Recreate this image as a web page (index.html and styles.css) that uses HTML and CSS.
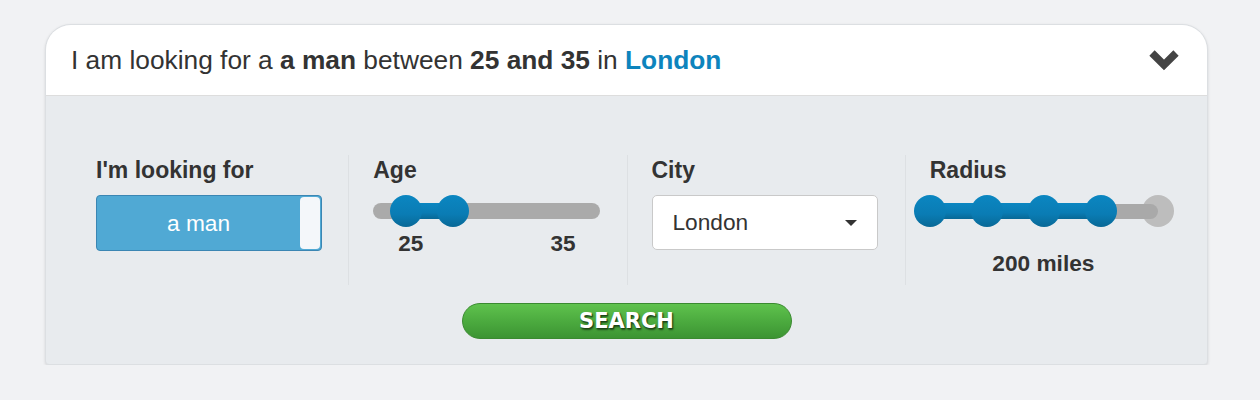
FILE: index.html
```html
<!DOCTYPE html>
<html lang="en">
<head>
<meta charset="utf-8">
<title>Search</title>
<link rel="stylesheet" href="styles.css">
</head>
<body>
<div class="card">
  <div class="card-header">
    <div class="summary">I am looking for a <b>a man</b> between <b>25 and 35</b> in <b class="city">London</b></div>
    <svg class="chevron" width="32" height="23" viewBox="0 0 32 23"><polyline points="4,4 16,16 28,4" fill="none" stroke="#444" stroke-width="7.5" stroke-linejoin="miter" stroke-linecap="butt"/></svg>
  </div>
  <div class="card-body">
    <div class="filters">
      <div class="col">
        <div class="label">I'm looking for</div>
        <div class="toggle"><span class="toggle-text">a man</span><span class="knob"></span></div>
      </div>
      <div class="col">
        <div class="label">Age</div>
        <svg class="age-slider" width="228" height="34" viewBox="0 0 228 34">
          <defs>
            <linearGradient id="blue" x1="0" y1="0" x2="0" y2="1">
              <stop offset="0" stop-color="#0b86c1"/>
              <stop offset="0.6" stop-color="#0a7cb4"/>
              <stop offset="1" stop-color="#086896"/>
            </linearGradient>
          </defs>
          <rect x="0" y="9" width="227" height="16" rx="8" fill="#aaaaaa"/>
          <rect x="33" y="9" width="47" height="16" fill="url(#blue)"/>
          <circle cx="33" cy="17" r="16" fill="url(#blue)"/>
          <circle cx="80" cy="17" r="16" fill="url(#blue)"/>
        </svg>
        <div class="range-labels"><span>25</span><span>35</span></div>
      </div>
      <div class="col">
        <div class="label">City</div>
        <div class="select"><span>London</span><span class="caret"></span></div>
      </div>
      <div class="col">
        <div class="label">Radius</div>
        <svg class="radius-slider" width="262" height="34" viewBox="0 0 262 34">
          <defs>
            <linearGradient id="blue2" x1="0" y1="0" x2="0" y2="1">
              <stop offset="0" stop-color="#0b86c1"/>
              <stop offset="0.6" stop-color="#0a7cb4"/>
              <stop offset="1" stop-color="#086896"/>
            </linearGradient>
          </defs>
          <circle cx="245" cy="17" r="16" fill="#bdbdbd"/>
          <rect x="180" y="10" width="65" height="15" rx="7.5" fill="#a9a9a9"/>
          <rect x="17" y="9" width="171" height="16" fill="url(#blue2)"/>
          <circle cx="17" cy="17" r="16" fill="url(#blue2)"/>
          <circle cx="74" cy="17" r="16" fill="url(#blue2)"/>
          <circle cx="131" cy="17" r="16" fill="url(#blue2)"/>
          <circle cx="188" cy="17" r="16" fill="url(#blue2)"/>
        </svg>
        <div class="radius-value">200 miles</div>
      </div>
    </div>
    <div class="actions">
      <button class="search-btn">SEARCH</button>
    </div>
  </div>
</div>
</body>
</html>
```
FILE: styles.css
```css
html, body {
  margin: 0;
  padding: 0;
  background: #f1f2f4;
}
body {
  font-family: "Liberation Sans", Arial, sans-serif;
  color: #333;
  padding: 24px 0 0 45px;
}
.card {
  width: 1161px;
  border: 1px solid #dcdfe2;
  border-radius: 26px 26px 4px 4px;
  background: #e8ebee;
  box-shadow: 0 1px 3px rgba(0, 0, 0, 0.12);
  overflow: hidden;
}
.card-header {
  height: 70px;
  background: #fff;
  border-bottom: 1px solid #dddddd;
  display: flex;
  align-items: center;
  justify-content: space-between;
  padding: 0 27px 0 25px;
}
.summary {
  font-size: 26.3px;
  color: #333;
}
.summary b {
  font-weight: bold;
}
.summary .city {
  color: #0d84bd;
}
.chevron {
  display: block;
  margin-top: 1px;
}
.card-body {
  padding: 59px 24px 25px 24px;
}
.filters {
  display: grid;
  grid-template-columns: repeat(4, minmax(0, 1fr));
}
.col {
  padding: 2px 26px 8px 24px;
  border-left: 1px solid #dde0e3;
  min-width: 0;
}
.col:first-child {
  border-left: none;
  padding-left: 26px;
}
.label {
  font-size: 23px;
  font-weight: bold;
  color: #333;
  margin-bottom: 11px;
}
.toggle {
  width: 224px;
  height: 52px;
  background: #50a9d4;
  border: 1px solid #3b86b3;
  border-radius: 4px;
  display: flex;
  align-items: stretch;
  padding: 1px 0;
}
.toggle-text {
  flex: 1;
  color: #fff;
  font-size: 22.7px;
  display: flex;
  align-items: center;
  justify-content: center;
}
.knob {
  width: 20px;
  background: #f4f7fa;
  border-radius: 4px;
  margin-right: 1px;
}
.age-slider {
  display: block;
  margin: -1px 0 0 0;
}
.range-labels {
  display: flex;
  justify-content: space-between;
  padding: 0 25px;
  font-size: 22.5px;
  font-weight: bold;
  margin-top: 3px;
}
.select {
  width: 184px;
  height: 53px;
  background: #fff;
  border: 1px solid #c9c9c9;
  border-radius: 5px;
  display: flex;
  align-items: center;
  justify-content: space-between;
  padding: 0 20px;
  font-size: 22.7px;
  color: #333;
}
.caret {
  width: 0;
  height: 0;
  border-left: 6px solid transparent;
  border-right: 6px solid transparent;
  border-top: 6px solid #333;
}
.radius-slider {
  display: block;
  margin: -1px -17px 0 -17px;
}
.radius-value {
  text-align: center;
  font-size: 22.7px;
  font-weight: bold;
  margin-top: 22px;
}
.actions {
  display: flex;
  justify-content: center;
  margin-top: 18px;
}
.search-btn {
  width: 330px;
  height: 36px;
  border: 1px solid #3a8a30;
  border-radius: 18px;
  background: linear-gradient(to bottom, #5fc24d 0%, #4cab3f 50%, #3c9433 100%);
  color: #fff;
  font-family: "DejaVu Sans", Verdana, sans-serif;
  font-weight: bold;
  font-size: 21px;
  text-shadow: 1px 1px 1px #1d4516, 1px 2px 2px rgba(0, 0, 0, 0.5);
  padding: 0;
  cursor: pointer;
}
```
